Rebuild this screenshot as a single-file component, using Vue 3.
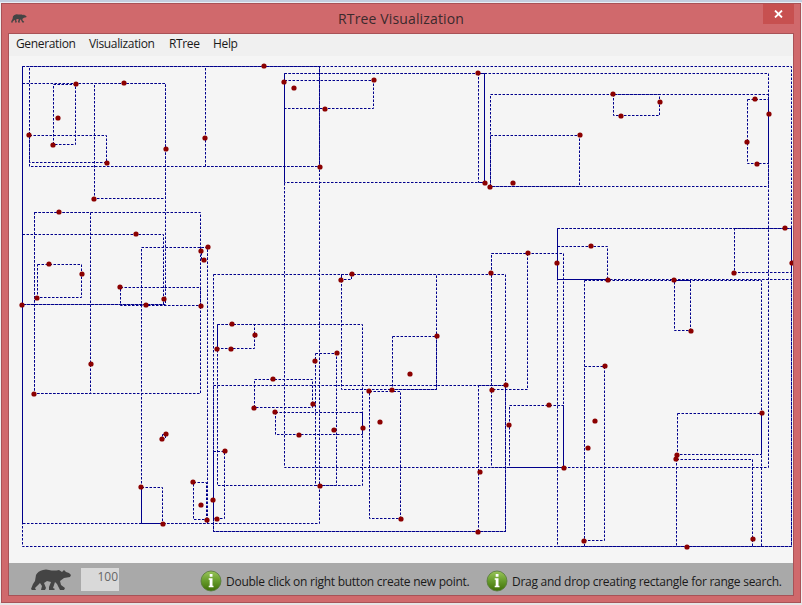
<script setup>
const menus = [
  { label: 'Generation', width: 73 },
  { label: 'Visualization', width: 80 },
  { label: 'RTree', width: 44 },
  { label: 'Help', width: 40 }
]

// Bounding boxes: [left, top, right, bottom]
const boxes = [
  [22, 66, 791, 546], [22, 66, 319, 523], [284, 73, 768, 467], [557, 228, 791, 546],
  [29, 66, 319, 166], [205, 66, 319, 166], [22, 83, 165, 304], [94, 83, 165, 198],
  [53, 84, 75, 144], [29, 135, 106, 162], [22, 234, 163, 304], [34, 212, 200, 393],
  [34, 212, 90, 393], [37, 264, 81, 297], [120, 287, 200, 305], [141, 247, 207, 523],
  [201, 247, 207, 259], [141, 487, 162, 523], [193, 482, 206, 519], [162, 434, 165, 438],
  [213, 274, 505, 531], [213, 385, 505, 531], [213, 451, 224, 518], [217, 324, 362, 485],
  [217, 324, 254, 348], [254, 379, 312, 407], [275, 412, 362, 434], [315, 353, 336, 485],
  [341, 274, 436, 389], [341, 274, 351, 279], [392, 336, 436, 389], [369, 391, 400, 518],
  [478, 385, 505, 531], [284, 73, 484, 182], [478, 73, 484, 182], [284, 80, 373, 108],
  [490, 94, 768, 186], [490, 135, 579, 186], [613, 94, 659, 115], [747, 99, 768, 163],
  [491, 253, 563, 467], [491, 253, 527, 389], [509, 405, 563, 467], [557, 228, 791, 279],
  [557, 246, 607, 279], [734, 228, 791, 272], [584, 280, 761, 546], [584, 366, 604, 540],
  [674, 280, 690, 330], [677, 413, 761, 454], [676, 459, 752, 546]
]

const points = [
  [264, 66], [76, 84], [124, 83], [58, 118], [29, 135], [53, 145], [107, 163], [166, 149],
  [205, 138], [94, 199], [320, 167], [284, 82], [294, 88], [374, 80], [325, 109], [478, 73],
  [485, 183], [490, 187], [513, 183], [613, 94], [660, 102], [621, 116], [580, 135],
  [755, 99], [769, 114], [747, 142], [757, 164], [59, 212], [136, 234], [49, 264], [82, 274],
  [37, 298], [22, 305], [120, 287], [146, 305], [164, 299], [201, 306], [201, 251],
  [208, 247], [204, 260], [91, 364], [34, 394], [232, 324], [255, 335], [217, 349],
  [231, 349], [352, 274], [341, 280], [437, 336], [410, 374], [315, 361], [337, 353],
  [273, 379], [369, 391], [392, 390], [254, 408], [275, 412], [313, 404], [299, 435],
  [334, 430], [363, 428], [380, 422], [320, 486], [225, 451], [401, 519], [213, 500],
  [217, 519], [207, 520], [201, 505], [193, 482], [166, 434], [162, 439], [141, 487],
  [163, 524], [528, 253], [491, 273], [557, 263], [591, 246], [608, 280], [506, 385],
  [492, 390], [549, 405], [509, 425], [564, 468], [480, 472], [478, 532], [605, 366],
  [595, 421], [588, 448], [584, 541], [785, 228], [792, 263], [734, 273], [674, 280],
  [691, 331], [762, 413], [677, 455], [676, 459], [753, 539], [687, 547]
]

const hints = [
  { text: 'Double click on right button create new point.', width: 286 },
  { text: 'Drag and drop creating rectangle for range search.', width: 300 }
]

const bear =
  'M0 20 L2 15 L4 12 L5 6 Q7 2 12 1 Q15 0 18 1 Q23 2 28 1 L31 3 L33 1 L35 3 L38 4 L40 6 L39 8 L33 9 L29 12 L30 16 L34 19 L33 21 L29 21 L26 15 L24 13 L22 19 L24 20 L23 21 L18 21 L18 18 L20 13 L16 12 L13 14 L15 19 L14 21 L10 21 L11 17 L9 14 L6 17 L4 19 L5 21 L1 21 Z'
</script>

<template>
  <div class="desktop">
    <div class="window">
      <header class="titlebar">
        <svg class="app-icon" viewBox="0 0 41 22" preserveAspectRatio="none"><path :d="bear" /></svg>
        <h1>RTree Visualization</h1>
        <button class="close" aria-label="Close">
          <svg viewBox="0 0 9 8"><path d="M1 .5 L8 7.5 M8 .5 L1 7.5" /></svg>
        </button>
      </header>
      <div class="client">
        <nav>
          <span v-for="m in menus" :key="m.label" class="menu" :style="{ width: m.width + 'px' }">{{ m.label }}</span>
        </nav>
        <svg class="plot" viewBox="9 56 784 507">
          <rect
            v-for="(b, i) in boxes" :key="'b' + i" class="box"
            :x="b[0] + 0.5" :y="b[1] + 0.5" :width="b[2] - b[0]" :height="b[3] - b[1]"
          />
          <circle v-for="(p, i) in points" :key="'p' + i" class="point" :cx="p[0]" :cy="p[1]" r="2.6" />
        </svg>
        <footer>
          <svg class="bear" viewBox="0 0 41 22"><path :d="bear" /></svg>
          <div class="count">100</div>
          <div class="hints">
            <div v-for="h in hints" :key="h.text" class="hint" :style="{ width: h.width + 'px' }">
              <svg class="info" viewBox="0 0 22 22">
                <defs>
                  <linearGradient id="green" x1="0" y1="0" x2="0" y2="1">
                    <stop offset="0" stop-color="#99c55a" />
                    <stop offset="0.5" stop-color="#669b2b" />
                    <stop offset="1" stop-color="#3f7006" />
                  </linearGradient>
                </defs>
                <circle cx="11" cy="11" r="10" fill="url(#green)" stroke="#56793a" stroke-width=".8" />
                <path d="M9.7 4h2.8v2.8h-2.8z M8.7 8.3h3.8v7.4h1v1.5h-4.8v-1.5h1v-5.9h-1z" fill="#fff" />
              </svg>
              <span>{{ h.text }}</span>
            </div>
          </div>
        </footer>
      </div>
    </div>
  </div>
</template>

<style>
body { margin: 0; overflow: hidden; }
</style>

<style scoped>
.desktop {
  box-sizing: border-box;
  width: 802px;
  height: 605px;
  padding: 3px 1px 2px;
  background: linear-gradient(#c3cedf 0 2px, #e9eef4 2px 3px, #f0f0f0 3px 602px, #e6e5e6 602px);
  font-family: "Open Sans", "Noto Sans", sans-serif;
  color: #1a1a1a;
}
.window {
  box-sizing: border-box;
  width: 800px;
  height: 600px;
  padding: 0 7px;
  border: 1px solid #a85257;
  background: #d0696c;
}
.titlebar { display: flex; height: 30px; margin-right: -1px; }
.app-icon { width: 16px; height: 9px; margin: 10px 0 0 2px; fill: #444; }
h1 {
  flex: 1;
  margin: 0 0 0 12px;
  font-size: 14px;
  line-height: 29px;
  font-weight: 400;
  letter-spacing: 0.14px;
  text-align: center;
  color: #3b2a2c;
}
.close {
  display: flex;
  justify-content: center;
  align-items: center;
  width: 31px;
  height: 20px;
  padding: 0;
  border: 0;
  background: #c75050;
}
.close svg { width: 9px; height: 8px; stroke: #fff; stroke-width: 1.8; fill: none; }
.client { width: 784px; height: 561px; outline: 1px solid #a85257; }
nav { display: flex; height: 22px; box-sizing: border-box; padding-left: 7px; background: #f0f0f0; }
.menu { font-size: 12px; line-height: 20px; letter-spacing: -0.35px; white-space: nowrap; }
.plot { display: block; width: 784px; height: 507px; background: #f5f5f5; }
.box { fill: none; stroke: #00008b; stroke-width: 1; stroke-dasharray: 2.5 1.5; }
.point { fill: #8b0000; }
footer { display: flex; height: 32px; background: #a9a9a9; }
.bear { width: 41px; height: 22px; margin: 6px 0 0 22px; fill: #444; }
.count {
  box-sizing: border-box;
  width: 38px;
  height: 23px;
  margin: 5px 0 0 9px;
  padding-right: 1px;
  background: #d9d9d9;
  color: #666;
  font-size: 12px;
  line-height: 18px;
  text-align: right;
}
.hints { display: flex; margin-left: 81px; }
.hint { display: flex; align-items: center; height: 36px; white-space: nowrap; font-size: 12px; }
.info { flex: none; width: 22px; height: 22px; margin-right: 4px; }
.hint span { letter-spacing: -0.26px; }
</style>
